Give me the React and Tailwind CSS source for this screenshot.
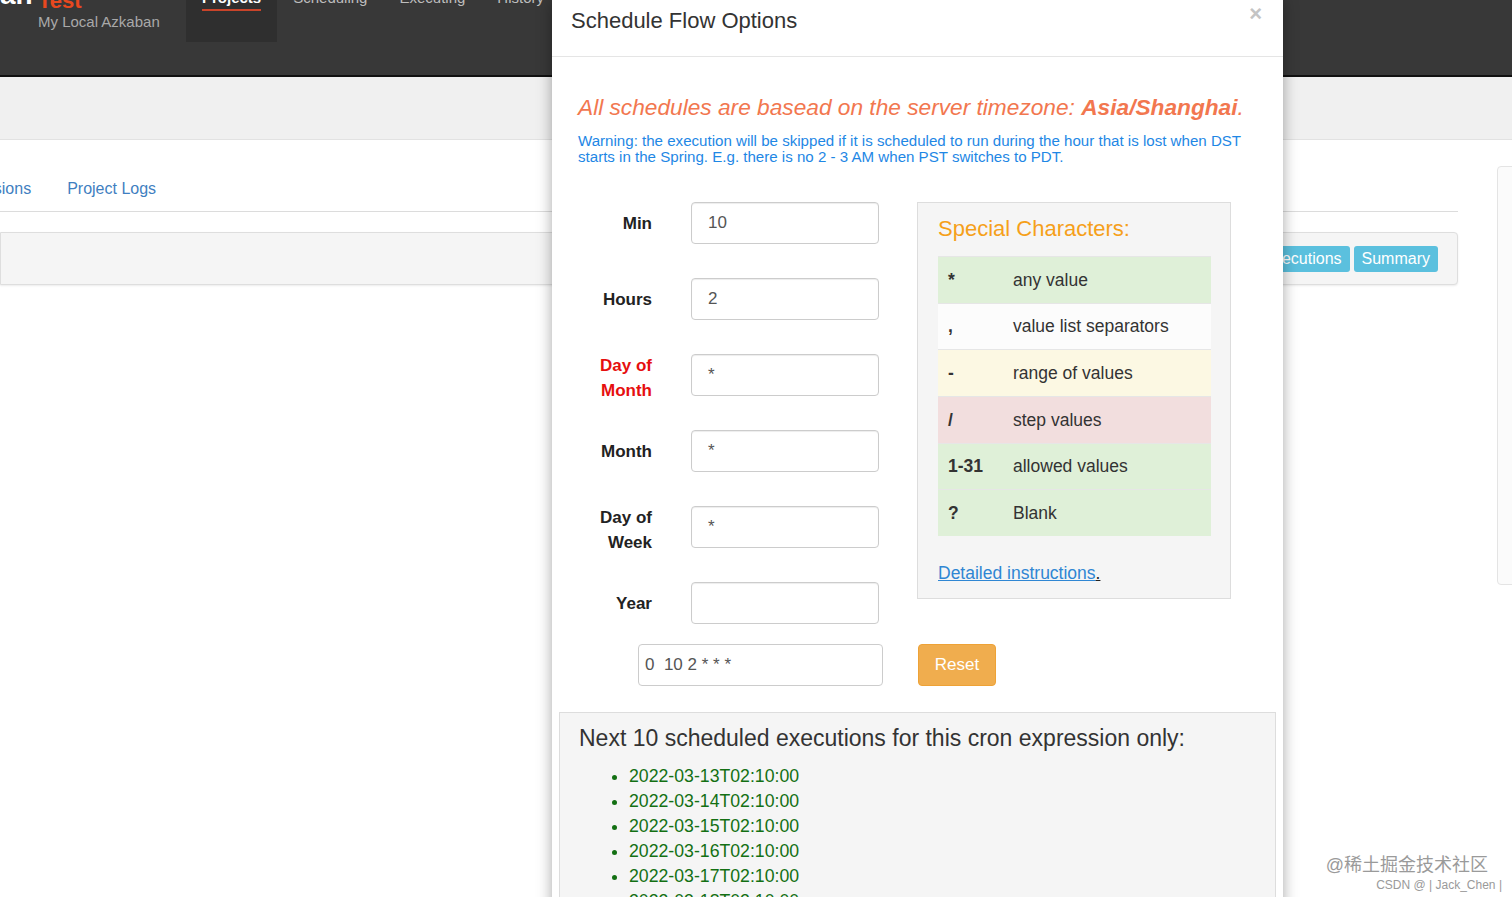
import React from 'react';

const fields = [
  { label: ['Min'], value: '10', red: false },
  { label: ['Hours'], value: '2', red: false },
  { label: ['Day of', 'Month'], value: '*', red: true },
  { label: ['Month'], value: '*', red: false },
  { label: ['Day of', 'Week'], value: '*', red: false },
  { label: ['Year'], value: '', red: false },
];

const specials = [
  { key: '*', text: 'any value', bg: 'bg-[#dff0d8]' },
  { key: ',', text: 'value list separators', bg: 'bg-[#fcfcfc]' },
  { key: '-', text: 'range of values', bg: 'bg-[#fcf8e3]' },
  { key: '/', text: 'step values', bg: 'bg-[#f2dede]' },
  { key: '1-31', text: 'allowed values', bg: 'bg-[#dff0d8]' },
  { key: '?', text: 'Blank', bg: 'bg-[#dff0d8]' },
];

const runs = [13, 14, 15, 16, 17, 18, 19, 20, 21, 22].map((d) => `2022-03-${d}T02:10:00`);

function Page() {
  return (
    <div className="w-full">
      {/* Navbar */}
      <div className="h-[77px] bg-[#383838] border-b-2 border-[#111] flex overflow-hidden">
        <div className="w-[186px] shrink-0 flex items-start">
          <span className="text-[28px] font-bold text-white leading-[30px] -mt-[20px] w-[38px]">an</span>
          <div className="flex flex-col -mt-[11px]">
            <span className="text-[22px] font-bold text-[#e8481f] leading-[24px]">Test</span>
            <span className="text-[15px] text-[#a9a9a9] leading-[18px]">My Local Azkaban</span>
          </div>
        </div>
        <div className="flex items-start">
          <div className="h-[42px] bg-[#2f2f2f] px-4 flex flex-col">
            <span className="text-[15px] font-bold text-white leading-[20px] -mt-[12px]">Projects</span>
            <div className="h-[2px] bg-[#c9442a] mt-[1px]" />
          </div>
          {['Scheduling', 'Executing', 'History'].map((t) => (
            <div key={t} className="px-4">
              <span className="block text-[15px] text-[#bdbdbd] leading-[20px] -mt-[12px]">{t}</span>
            </div>
          ))}
        </div>
      </div>
      {/* Grey band */}
      <div className="h-[63px] bg-[#f0f0f0] border-b border-[#e2e2e2]" />
      {/* Content */}
      <div className="flex">
        <div className="w-[1458px] shrink-0">
          <div className="flex items-end h-[72px] border-b border-[#dcdcdc] pb-[11px]">
            <span className="text-[16px] text-[#3f7fc1] leading-[22px] -ml-[56px]">Permissions</span>
            <span className="text-[16px] text-[#3f7fc1] leading-[22px] ml-[36px]">Project Logs</span>
          </div>
          <div className="mt-[20px] h-[53px] bg-[#f5f5f5] border border-[#dedede] rounded-r-[4px] shadow-[0_1px_2px_rgba(0,0,0,0.08)] flex items-center justify-end pr-[19px] gap-[4px]">
            <span className="h-[26px] px-[8px] rounded-[3px] bg-[#5bc0de] text-white text-[16px] leading-[26px]">Flow Executions</span>
            <span className="h-[26px] px-[8px] rounded-[3px] bg-[#5bc0de] text-white text-[16px] leading-[26px]">Summary</span>
          </div>
        </div>
        <div className="ml-[39px] mt-[26px] w-[40px] shrink-0 h-[419px] border border-[#e4e4e4] rounded-[4px] bg-[#fbfbfb]" />
      </div>
    </div>
  );
}

function Modal() {
  return (
    <div className="absolute left-[552px] top-0 w-[731px] h-[950px] bg-white shadow-[0_0_14px_rgba(0,0,0,0.35)]">
      <div className="h-[57px] border-b border-[#e5e5e5] flex items-start justify-between pl-[19px] pr-[21px]">
        <span className="text-[22px] text-[#333] leading-[30px] mt-[6px]">Schedule Flow Options</span>
        <span className="text-[22px] font-bold text-[#c4c4c4] leading-[24px] mt-[2px]">×</span>
      </div>
      <div className="pl-[26px] pr-[20px]">
        <p className="mt-[35px] text-[22.7px] italic text-[#f2774f] leading-[30px] whitespace-nowrap">
          All schedules are basead on the server timezone: <b>Asia/Shanghai</b>.
        </p>
        <p className="mt-[11px] text-[15.1px] text-[#1e87e5] leading-[16px] whitespace-nowrap">
          Warning: the execution will be skipped if it is scheduled to run during the hour that is lost when DST
          <br />
          starts in the Spring. E.g. there is no 2 - 3 AM when PST switches to PDT.
        </p>
        <div className="mt-[37px] flex items-start">
          <div className="flex flex-col gap-[34px] shrink-0">
            {fields.map((f, i) => (
              <div key={i} className="flex items-center h-[42px]">
                <div
                  className={`w-[74px] text-right text-[17px] font-bold leading-[25px] ${f.label.length > 1 ? 'mt-[6px]' : ''} ${f.red ? 'text-[#e60f0f]' : 'text-[#222]'}`}
                >
                  {f.label.map((l) => (
                    <div key={l}>{l}</div>
                  ))}
                </div>
                <div className="ml-[39px] w-[188px] h-[42px] border border-[#cccccc] rounded-[4px] shadow-[inset_0_1px_1px_rgba(0,0,0,0.075)] flex items-center pl-[16px] text-[17px] text-[#555]">
                  {f.value}
                </div>
              </div>
            ))}
          </div>
          <div className="ml-[38px] w-[314px] shrink-0 h-[397px] bg-[#f5f5f5] border border-[#dddddd] pt-[11px] pl-[20px] pr-[19px]">
            <div className="text-[22px] text-[#f5a01a] leading-[30px] whitespace-nowrap">Special Characters:</div>
            <div className="mt-[12px]">
              {specials.map((s, i) => (
                <div key={i} className={`h-[46.7px] flex items-center text-[17.5px] text-[#333] border-t border-[#e6e6e6] whitespace-nowrap ${s.bg}`}>
                  <span className="w-[75px] shrink-0 pl-[10px] font-bold">{s.key}</span>
                  <span>{s.text}</span>
                </div>
              ))}
            </div>
            <div className="mt-[26px] text-[17.5px] leading-[22px]">
              <span className="text-[#2f86d3] underline">Detailed instructions</span>
              <span className="text-[#222] underline">.</span>
            </div>
          </div>
        </div>
        <div className="flex items-center mt-[20px]">
          <div className="ml-[60px] w-[245px] h-[42px] border border-[#cccccc] rounded-[4px] flex items-center pl-[6px] text-[17px] text-[#555] whitespace-pre">
            0  10 2 * * *
          </div>
          <div className="ml-[35px] w-[78px] h-[42px] rounded-[4px] bg-[#f0ad4e] border border-[#eea236] text-white text-[17px] flex items-center justify-center">
            Reset
          </div>
        </div>
      </div>
      <div className="mx-[7px] mt-[26px] bg-[#f5f5f5] border border-[#dddddd] pl-[19px] pt-[12px] h-[400px]">
        <div className="text-[23px] text-[#333] leading-[26px] whitespace-nowrap">Next 10 scheduled executions for this cron expression only:</div>
        <ul className="list-disc pl-[50px] mt-[13px] text-[17.7px] text-[#137013] leading-[25px] marker:text-[#137013]">
          {runs.map((r) => (
            <li key={r}>{r}</li>
          ))}
        </ul>
      </div>
    </div>
  );
}

export default function App() {
  return (
    <div
      className="relative w-[1512px] h-[897px] overflow-hidden bg-white"
      style={{ fontFamily: '"Liberation Sans", Arial, "Noto Sans CJK SC", sans-serif' }}
    >
      <Page />
      <Modal />
      <div className="absolute right-[24px] bottom-[4px] flex flex-col items-end">
        <span className="text-[18px] text-[#9a9a9a] leading-[24px]">@稀土掘金技术社区</span>
        <span className="text-[12px] text-[#9a9a9a] leading-[16px] -mr-[14px]">CSDN @ | Jack_Chen |</span>
      </div>
    </div>
  );
}
